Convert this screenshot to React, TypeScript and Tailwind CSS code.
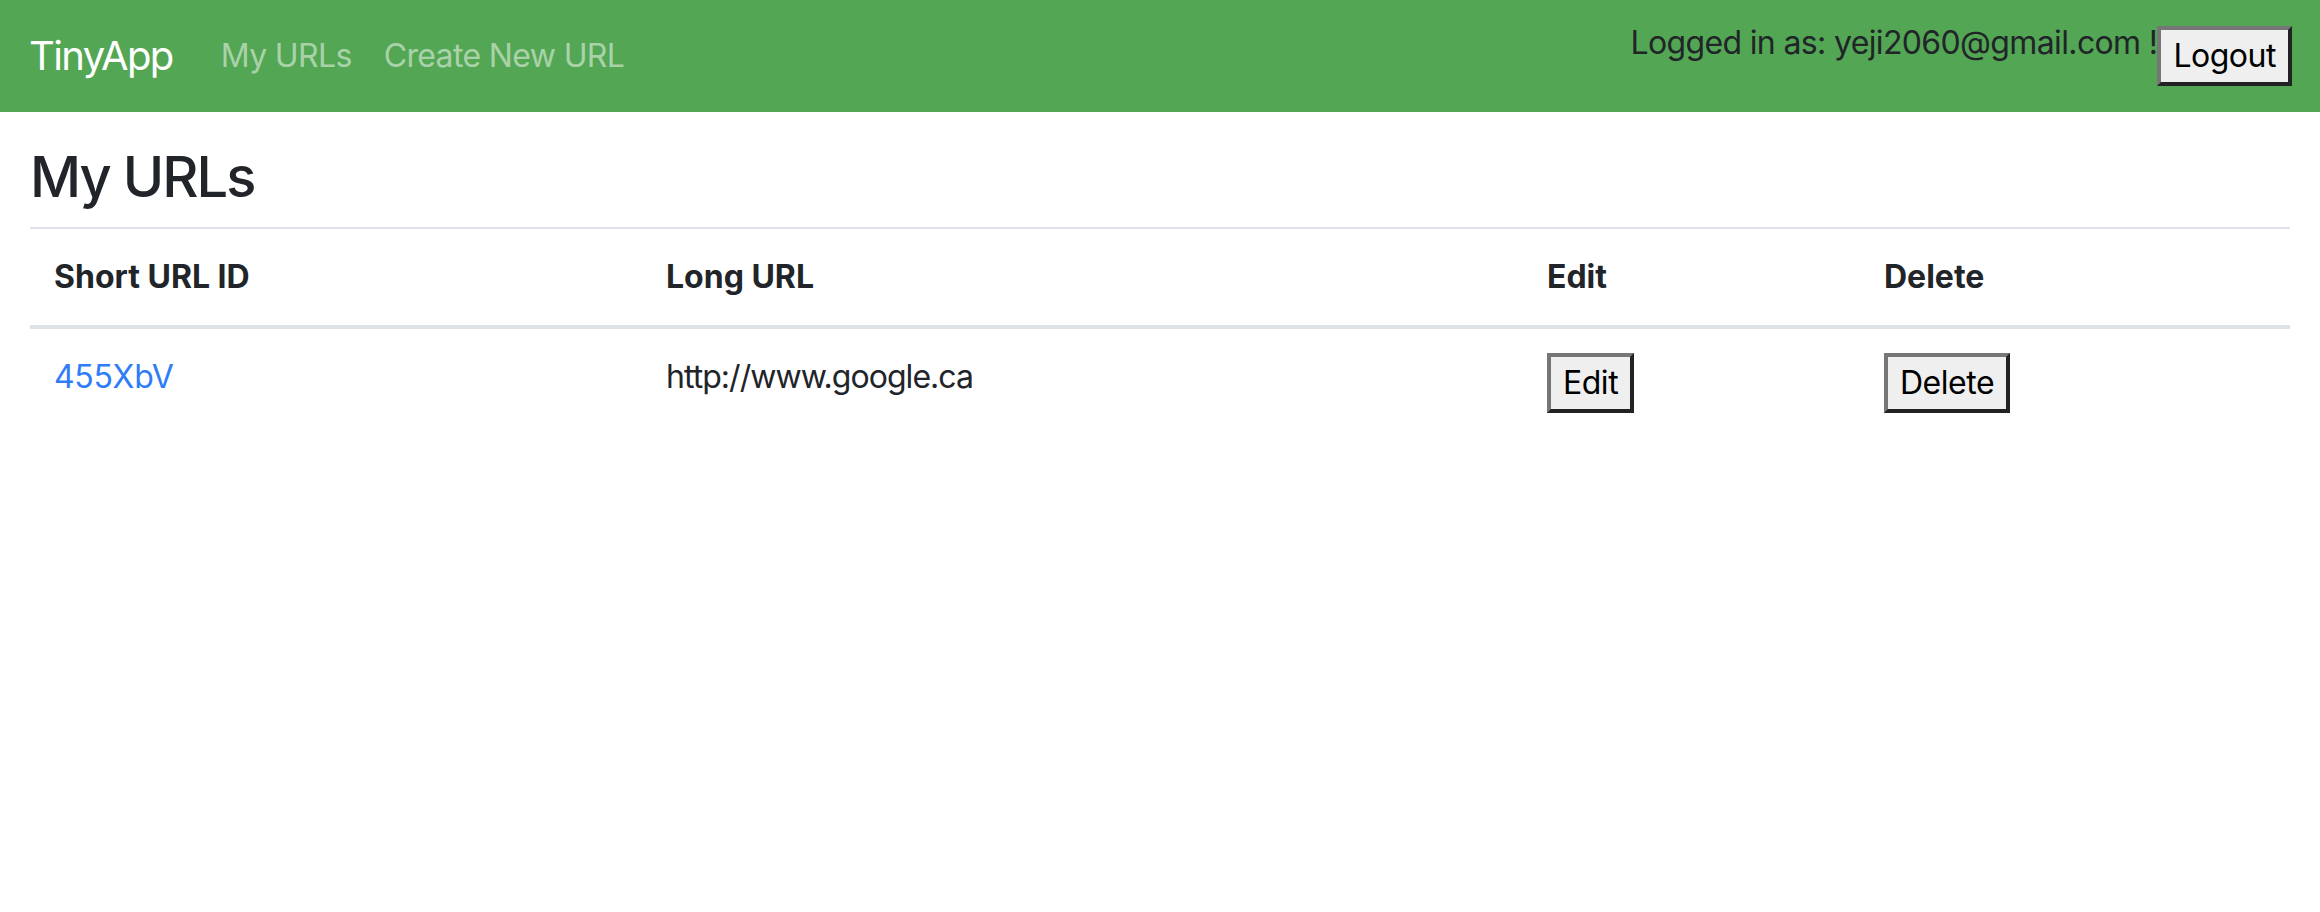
const rows = [{ id: "455XbV", longURL: "http://www.google.ca" }];

function OldButton({ children }: { children: React.ReactNode }) {
  return (
    <button
      type="button"
      className="border-4 border-t-[#767676] border-l-[#767676] border-r-[#222222] border-b-[#222222] bg-[#efefef] px-3 py-[2px] text-[32px] leading-[48px] tracking-[-0.015em] text-black"
    >
      {children}
    </button>
  );
}

export default function App() {
  return (
    <div className="min-h-screen bg-white font-['Inter',sans-serif] text-[32px] leading-[48px] tracking-[-0.02em] text-[#212529]">
      <nav className="flex h-[112px] items-center justify-between bg-[#53a653] pl-[29px] pr-[28px]">
        <div className="flex items-center">
          <a href="#" className="mr-8 py-[10px] text-[40px] leading-[60px] tracking-[-0.04em] text-white">
            TinyApp
          </a>
          <a href="#" className="px-4 py-4 text-white/50">
            My URLs
          </a>
          <a href="#" className="px-4 py-4 text-white/50">
            Create New URL
          </a>
        </div>
        <div className="flex items-start self-start pt-[19px]">
          <span>Logged in as: yeji2060@gmail.com !</span>
          <span className="-mt-[3px] pt-[10px]">
            <OldButton>Logout</OldButton>
          </span>
        </div>
      </nav>

      <main className="px-[30px] pt-8">
        <h3 className="mb-4 text-[56px] font-medium leading-[67px] tracking-[-0.035em]">My URLs</h3>
        <table className="w-full border-collapse">
          <thead>
            <tr>
              <th className="w-[612px] border-t-2 border-b-4 border-[#dee2e6] p-6 text-left font-bold tracking-normal">Short URL ID</th>
              <th className="w-[881px] border-t-2 border-b-4 border-[#dee2e6] p-6 text-left font-bold tracking-normal">Long URL</th>
              <th className="w-[337px] border-t-2 border-b-4 border-[#dee2e6] p-6 text-left font-bold tracking-normal">Edit</th>
              <th className="border-t-2 border-b-4 border-[#dee2e6] p-6 text-left font-bold tracking-normal">Delete</th>
            </tr>
          </thead>
          <tbody>
            {rows.map((row) => (
              <tr key={row.id}>
                <td className="p-6 align-top">
                  <a href="#" className="tracking-[-0.01em] text-[#2f7df6]">
                    {row.id}
                  </a>
                </td>
                <td className="p-6 align-top tracking-[-0.03em]">{row.longURL}</td>
                <td className="p-6 align-top">
                  <OldButton>Edit</OldButton>
                </td>
                <td className="p-6 align-top">
                  <OldButton>Delete</OldButton>
                </td>
              </tr>
            ))}
          </tbody>
        </table>
      </main>
    </div>
  );
}
